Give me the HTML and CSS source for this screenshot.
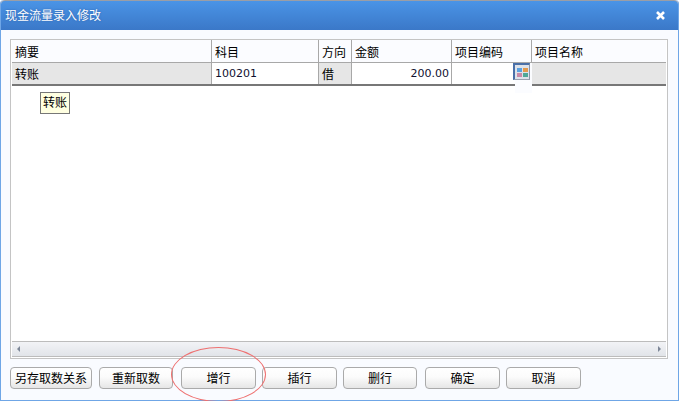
FILE: index.html
```html
<!DOCTYPE html>
<html lang="zh-CN">
<head>
    <meta charset="UTF-8">
    <title>现金流量录入修改</title>
    <link rel="stylesheet" href="styles.css">
</head>
<body>
    <div class="window">
        <div class="title-bar">
            <span class="title">现金流量录入修改</span>
            <svg class="close" width="11" height="11" viewBox="0 0 11 11">
                <path d="M2 2 L9 9 M9 2 L2 9" stroke="#fff" stroke-width="2.6" fill="none"/>
            </svg>
        </div>
        <div class="content">
            <div class="grid-frame">
                <div class="grid-head">
                    <div class="cell">摘要</div>
                    <div class="cell">科目</div>
                    <div class="cell">方向</div>
                    <div class="cell">金额</div>
                    <div class="cell">项目编码</div>
                    <div class="cell">项目名称</div>
                </div>
                <div class="grid-row">
                    <div class="cell">转账</div>
                    <div class="cell cell-edit num">100201</div>
                    <div class="cell">借</div>
                    <div class="cell cell-edit num amount">200.00</div>
                    <div class="cell cell-edit"></div>
                    <div class="cell"></div>
                </div>
                <div class="grid-body"></div>
                <div class="scrollbar">
                    <span class="arrow arrow-left"></span>
                    <span class="arrow arrow-right"></span>
                </div>
                <div class="picker">
                    <div class="picker-box">
                        <i class="c1"></i><i class="c2"></i><i class="c3"></i><i class="c4"></i>
                    </div>
                </div>
                <div class="tip">转账</div>
            </div>
            <div class="buttons">
                <button class="btn btn-first">另存取数关系</button>
                <button class="btn btn-short after1">重新取数</button>
                <button class="btn after2">增行</button>
                <button class="btn">插行</button>
                <button class="btn btn-short">删行</button>
                <button class="btn after2">确定</button>
                <button class="btn">取消</button>
            </div>
        </div>
        <div class="circle"></div>
    </div>
</body>
</html>
```

FILE: styles.css
```css
body {
    margin: 0;
    background-color: #fff;
    font-family: "Noto Sans CJK SC", "Liberation Sans", sans-serif;
    font-size: 12px;
    color: #000;
}
.window {
    position: relative;
    box-sizing: border-box;
    width: 679px;
    height: 401px;
    background: #f9fbff;
    border: 1px solid #6fa6e6;
    border-top: 0;
    border-radius: 4px 4px 0 0;
}
.title-bar {
    display: flex;
    justify-content: space-between;
    align-items: center;
    height: 30px;
    padding: 0 12px 2px 4px;
    background: linear-gradient(#4a94e6, #3b78c8);
    border-top: 1px solid #9a9ea6;
    border-radius: 4px 4px 0 0;
    box-sizing: border-box;
}
.title {
    color: #fff;
    text-shadow: 0 0 2px #2a5ea8;
}
.close {
    margin-top: 2px;
}
.content {
    padding: 9px 10px 0 9px;
}
.grid-frame {
    position: relative;
    display: flex;
    flex-direction: column;
    box-sizing: border-box;
    height: 320px;
    padding: 0 1px 1px 1px;
    background: #fff;
    border: 1px solid #c4c4c4;
}
.grid-head,
.grid-row {
    display: grid;
    grid-template-columns: 200px 107px 33px 100px 80px 1fr;
}
.grid-head {
    height: 23px;
    background: #fbfcff;
    border-bottom: 1px solid #a8a8a8;
    box-sizing: border-box;
}
.grid-row {
    height: 21px;
    background: #e6e6e6;
    border-bottom: 2px solid #777;
    box-sizing: content-box;
}
.cell {
    box-sizing: border-box;
    padding: 1px 2px 0 3px;
    line-height: 20px;
    border-right: 1px solid #a8a8a8;
    white-space: nowrap;
    overflow: hidden;
}
.grid-head .cell {
    padding-top: 2px;
}
.cell:last-child {
    border-right: 0;
}
.cell-edit {
    background: #fff;
}
.num {
    font-family: "DejaVu Sans", sans-serif;
    font-size: 11px;
    color: #101030;
}
.amount {
    text-align: right;
}
.grid-body {
    flex: 1;
}
.scrollbar {
    display: flex;
    justify-content: space-between;
    align-items: center;
    box-sizing: border-box;
    height: 16px;
    padding: 0 5px;
    background: linear-gradient(#f2f3f6, #e1e4e9);
    border-top: 1px solid #bcbcbc;
    border-bottom: 1px solid #bcbcbc;
}
.arrow {
    width: 0;
    height: 0;
    border-top: 3px solid transparent;
    border-bottom: 3px solid transparent;
}
.arrow-left {
    border-right: 3px solid #7d8798;
}
.arrow-right {
    border-left: 3px solid #7d8798;
}
.picker {
    position: absolute;
    left: 504px;
    top: 23px;
    width: 17px;
    height: 30px;
    background: #fbfcff;
}
.picker-box {
    display: grid;
    grid-template-columns: 5px 5px;
    grid-auto-rows: 4px;
    gap: 1px;
    align-content: center;
    justify-content: center;
    box-sizing: border-box;
    width: 17px;
    height: 17px;
    margin-left: -2px;
    background: #dde2ea;
    border-top: 2px solid #4a70a8;
    border-left: 2px solid #4a70a8;
    border-right: 1px solid #8a94a8;
    border-bottom: 1px solid #9aa2b0;
}
.picker-box i {
    display: block;
}
.c1 { background: #5ba2e0; }
.c2 { background: #e39a4e; }
.c3 { background: #c98aa8; }
.c4 { background: #4fa898; }
.tip {
    position: absolute;
    left: 29px;
    top: 52px;
    box-sizing: border-box;
    width: 30px;
    height: 22px;
    line-height: 18px;
    text-align: center;
    background: #ffffe1;
    border: 1px solid #777;
}
.buttons {
    display: flex;
    gap: 6px;
    margin-top: 8px;
}
.btn {
    box-sizing: border-box;
    width: 75px;
    height: 22px;
    padding: 0 0 2px;
    font: inherit;
    color: #000;
    background: linear-gradient(#fff, #fbfbfb 45%, #e6e6e6);
    border: 1px solid #aaa;
    border-radius: 4px;
}
.btn-first {
    width: 82px;
}
.btn-short {
    width: 74px;
}
.after1 {
    margin-left: 1px;
}
.after2 {
    margin-left: 2px;
}
.circle {
    position: absolute;
    left: 170px;
    top: 347px;
    box-sizing: border-box;
    width: 95px;
    height: 55px;
    border: 1px solid #ee7070;
    border-radius: 50%;
}
```
